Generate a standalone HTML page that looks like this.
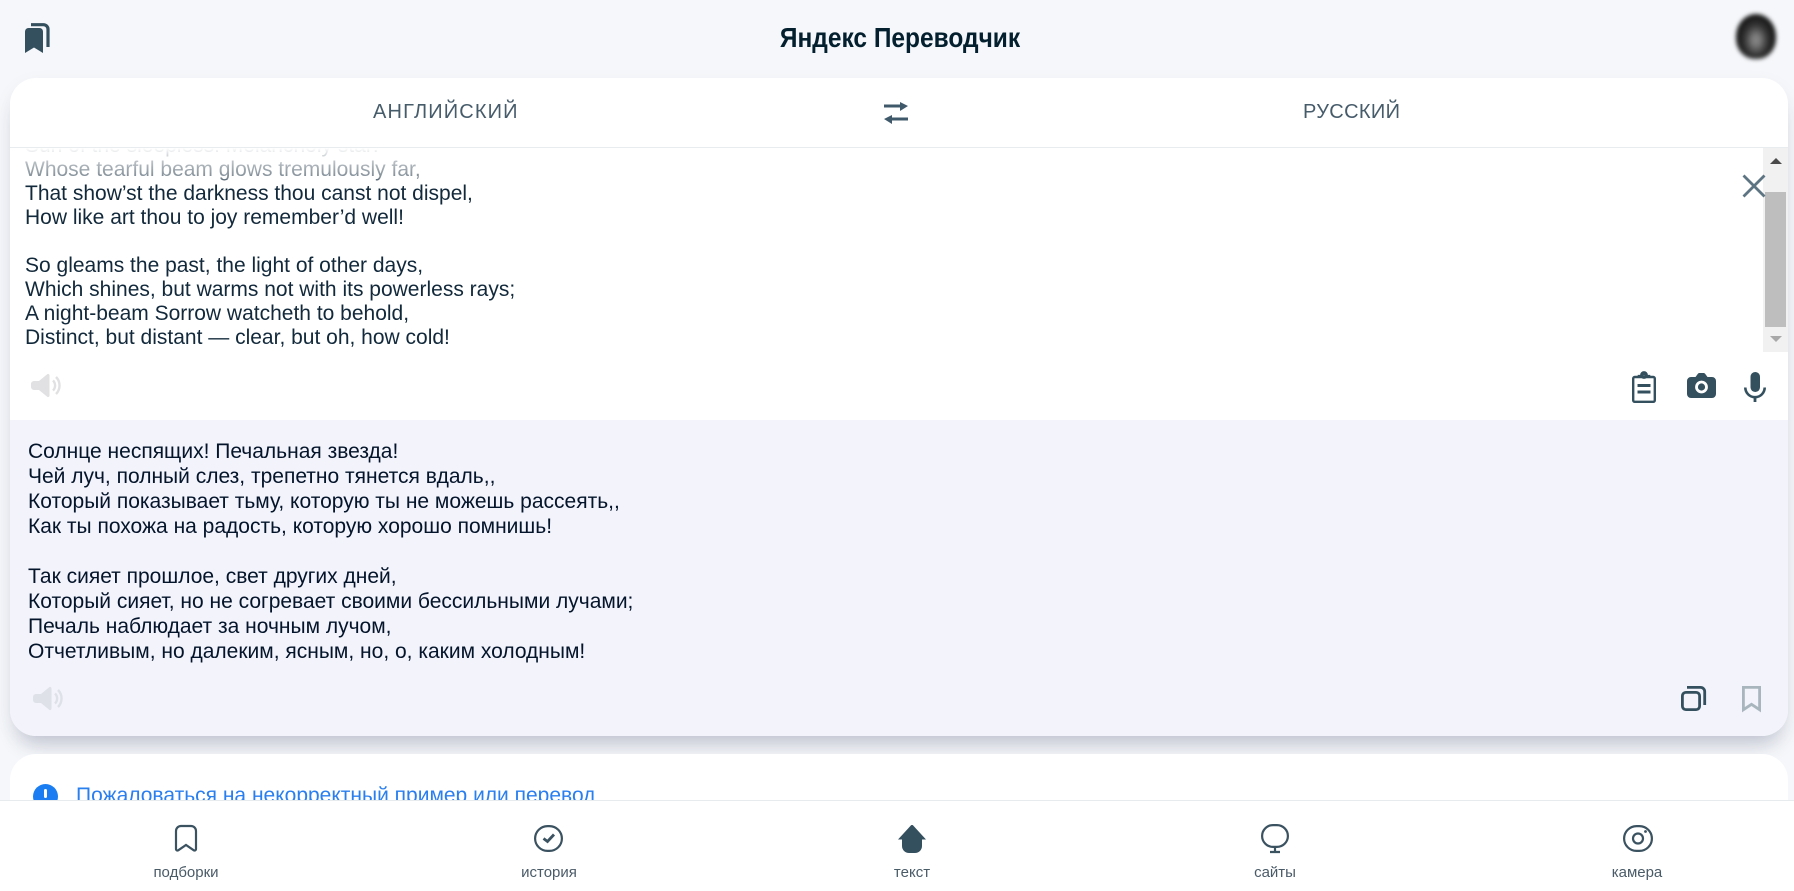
<!DOCTYPE html>
<html lang="ru">
<head>
<meta charset="utf-8">
<title>Яндекс Переводчик</title>
<style>
html,body{margin:0;padding:0;width:1794px;height:891px;overflow:hidden;background:#f5f7fa;font-family:"Liberation Sans",Arial,sans-serif}
.a{position:absolute}
svg{position:absolute;overflow:visible}
#title{left:680px;top:21px;width:440px;text-align:center;font-size:28px;line-height:34px;font-weight:bold;color:#04202f;transform:scaleX(.875);white-space:nowrap}
#card{left:10px;top:78px;width:1778px;height:658px;background:#fff;border-radius:26px;box-shadow:0 16px 20px -8px rgba(50,60,90,.24),0 6px 22px -4px rgba(60,70,110,.08);overflow:hidden}
.lang{top:99px;font-size:20px;line-height:26px;color:#475c6b;white-space:nowrap}
#hline{left:10px;top:147px;width:1778px;height:1px;background:#e9ecef}
#clip{left:10px;top:148px;width:1753px;height:204px;overflow:hidden}
#clip #src2{position:absolute;left:15px;top:-14px;font-size:21px;line-height:24px;color:#12293b;white-space:pre}
#fade{left:10px;top:148px;width:1753px;height:36px;background:linear-gradient(#fff 0,rgba(255,255,255,.8) 8px,rgba(255,255,255,.45) 30px,rgba(255,255,255,0) 36px)}
#tr{left:10px;top:420px;width:1778px;height:316px;background:#f2f3fb;border-radius:0 0 26px 26px}
#trt{left:28px;top:439px;font-size:21px;line-height:25px;color:#04142a;white-space:pre}
#card2{left:10px;top:754px;width:1778px;height:120px;background:#fff;border-radius:26px 26px 0 0}
#link{left:76px;top:783px;font-size:21px;line-height:26px;color:#2a7fef;white-space:nowrap}
#foot{left:0;top:800px;width:1794px;height:91px;background:#fff;border-top:1px solid #e8ebee;box-sizing:border-box}
.lab{top:864px;width:160px;text-align:center;font-size:15px;line-height:18px;color:#4a5b68}
#track{left:1763px;top:148px;width:25px;height:204px;background:#f1f1f1}
#thumb{left:1765px;top:192px;width:21px;height:135px;background:#bebebe}
#av{left:1736px;top:14px;width:40px;height:45px;border-radius:50% 50% 46% 46%;background:radial-gradient(ellipse at 50% 58%,#8a8a8a 0,#7a7a7a 14%,#333 42%,#151515 68%);filter:blur(2px)}
</style>
</head>
<body>

<svg style="left:25px;top:23px" width="25" height="31" viewBox="0 0 25 31">
<path d="M6 1.700h12.500a4.500 4.500 0 0 1 4.500 4.500V24" fill="none" stroke="#34505f" stroke-width="3.200"/>
<path d="M0 8.500A3.500 3.500 0 0 1 3.500 5h11A3.500 3.500 0 0 1 18 8.500V30l-9-5.500L0 30z" fill="#34505f"/>
</svg>
<div id="title" class="a">Яндекс Переводчик</div>
<div id="av" class="a"></div>

<div id="card" class="a"></div>
<div class="a lang" style="left:373px;letter-spacing:1.15px">АНГЛИЙСКИЙ</div>
<svg style="left:884px;top:102px" width="24" height="22" viewBox="0 0 24 22" fill="#40596a">
<rect x="0" y="2.500" width="18" height="3"/><path d="M16 0l8 4-8 5z"/>
<rect x="6" y="15.500" width="18" height="3"/><path d="M8 13l-8 4 8 5z"/>
</svg>
<div class="a lang" style="left:1303px;letter-spacing:.35px">РУССКИЙ</div>
<div id="hline" class="a"></div>

<div id="clip" class="a"><div id="src2">Sun of the sleepless! Melancholy star!
Whose tearful beam glows tremulously far,
That show’st the darkness thou canst not dispel,
How like art thou to joy remember’d well!

So gleams the past, the light of other days,
Which shines, but warms not with its powerless rays;
A night-beam Sorrow watcheth to behold,
Distinct, but distant — clear, but oh, how cold!</div></div>
<div id="fade" class="a"></div>

<div id="track" class="a"></div>
<div id="thumb" class="a"></div>
<svg style="left:1770px;top:157px" width="12" height="8"><path d="M0 7L6 1l6 6z" fill="#4a4a4a"/></svg>
<svg style="left:1770px;top:335px" width="12" height="8"><path d="M0 1l6 6 6-6z" fill="#a8a8a8"/></svg>

<svg style="left:1742px;top:174px" width="24" height="24" viewBox="0 0 24 24"><path d="M1.500 1.500l21 21M22.500 1.500l-21 21" stroke="#5d7583" stroke-width="2.800" fill="none"/></svg>

<svg style="left:31px;top:373px" width="29" height="25" viewBox="0 0 29 25">
<path d="M3 8h5L16.500 1a1.500 1.500 0 0 1 2 1.200v20.600a1.500 1.500 0 0 1-2 1.200L8 17H3a3 3 0 0 1-3-3v-3a3 3 0 0 1 3-3z" fill="#e1e1e3"/>
<path d="M22 7.500a7 7 0 0 1 0 10M25 4a12 12 0 0 1 0 17" fill="none" stroke="#e1e1e3" stroke-width="2.400"/>
</svg>

<svg style="left:1632px;top:371px" width="24" height="32" viewBox="0 0 24 32">
<rect x="1.200" y="6" width="21.600" height="24.800" rx="1.500" fill="none" stroke="#34505f" stroke-width="2.400"/>
<path d="M7 7V5.200h3a2 2 0 1 1 4 0h3V7" fill="none" stroke="#34505f" stroke-width="2.600"/>
<circle cx="12" cy="4" r="2.800" fill="none" stroke="#34505f" stroke-width="2.200"/>
<path d="M5.500 14.500h13M5.500 21h13" stroke="#34505f" stroke-width="3"/>
</svg>
<svg style="left:1687px;top:373px" width="29" height="25" viewBox="0 0 29 25">
<path d="M4 4h4.500L11 .6C11.400.2 12 0 12.500 0h4c.5 0 1.100.2 1.500.6L20.500 4H25a4 4 0 0 1 4 4v13a4 4 0 0 1-4 4H4a4 4 0 0 1-4-4V8a4 4 0 0 1 4-4z" fill="#34505f"/>
<circle cx="14.500" cy="14" r="5" fill="none" stroke="#fff" stroke-width="2.800"/>
</svg>
<svg style="left:1744px;top:372px" width="22" height="30" viewBox="0 0 22 30">
<rect x="6.500" y="0" width="9.500" height="20" rx="4.700" fill="#34505f"/>
<path d="M1.300 15.500a9.700 9.700 0 0 0 19.400 0" fill="none" stroke="#34505f" stroke-width="2.600"/>
<path d="M11 24v6" stroke="#34505f" stroke-width="2.800"/>
</svg>

<div id="tr" class="a"></div>
<div id="trt" class="a">Солнце неспящих! Печальная звезда!
Чей луч, полный слез, трепетно тянется вдаль,,
Который показывает тьму, которую ты не можешь рассеять,,
Как ты похожа на радость, которую хорошо помнишь!

Так сияет прошлое, свет других дней,
Который сияет, но не согревает своими бессильными лучами;
Печаль наблюдает за ночным лучом,
Отчетливым, но далеким, ясным, но, о, каким холодным!</div>

<svg style="left:33px;top:686px" width="29" height="25" viewBox="0 0 29 25">
<path d="M3 8h5L16.500 1a1.500 1.500 0 0 1 2 1.200v20.600a1.500 1.500 0 0 1-2 1.200L8 17H3a3 3 0 0 1-3-3v-3a3 3 0 0 1 3-3z" fill="#dfe1e8"/>
<path d="M22 7.500a7 7 0 0 1 0 10M25 4a12 12 0 0 1 0 17" fill="none" stroke="#dfe1e8" stroke-width="2.400"/>
</svg>
<svg style="left:1681px;top:686px" width="25" height="25" viewBox="0 0 25 25">
<rect x="1.400" y="6.400" width="17.200" height="17.200" rx="3.500" fill="none" stroke="#34505f" stroke-width="2.800"/>
<path d="M6 1.400h13.500a4.200 4.200 0 0 1 4.200 4.200V19" fill="none" stroke="#34505f" stroke-width="2.800"/>
</svg>
<svg style="left:1742px;top:686px" width="19" height="26" viewBox="0 0 19 26">
<path d="M1.400 1.400h16.200v22.300L9.500 18.300 1.400 23.700z" fill="none" stroke="#a9b5bc" stroke-width="2.800"/>
</svg>

<div id="card2" class="a"></div>
<svg style="left:33px;top:784px" width="25" height="25" viewBox="0 0 25 25">
<circle cx="12.500" cy="12.500" r="12.500" fill="#1a7ef2"/>
<rect x="11" y="5" width="3" height="9" rx="1.500" fill="#fff"/>
</svg>
<div id="link" class="a">Пожаловаться на некорректный пример или перевод</div>

<div id="foot" class="a"></div>
<svg style="left:175px;top:825px" width="22" height="27" viewBox="0 0 22 27">
<path d="M1 6A5 5 0 0 1 6 1h10a5 5 0 0 1 5 5v18a1.500 1.500 0 0 1-2.400 1.200L11 20l-7.600 5.200A1.500 1.500 0 0 1 1 24z" fill="none" stroke="#3b5261" stroke-width="2.200"/>
</svg>
<svg style="left:534px;top:825px" width="29" height="27" viewBox="0 0 29 27">
<rect x="1.100" y="1.100" width="26.800" height="24.800" rx="12.400" fill="none" stroke="#3b5261" stroke-width="2.200"/>
<path d="M9.500 13.500l4 3 6.500-7" fill="none" stroke="#3b5261" stroke-width="2.800"/>
</svg>
<svg style="left:898px;top:825px" width="28" height="28" viewBox="0 0 28 28">
<path d="M14 0c.6 0 1 .2 1.400.7L28 14.500h-4V21a7 7 0 0 1-7 7h-6a7 7 0 0 1-7-7v-6.500H0L12.600.7C13 .2 13.400 0 14 0z" fill="#34505f"/>
</svg>
<svg style="left:1261px;top:824px" width="28" height="29" viewBox="0 0 28 29">
<rect x="1.100" y="1.100" width="25.800" height="21.800" rx="10.900" fill="none" stroke="#3b5261" stroke-width="2.200"/>
<path d="M14 23v5M9 28h10" stroke="#3b5261" stroke-width="2.200"/>
</svg>
<svg style="left:1623px;top:825px" width="30" height="27" viewBox="0 0 30 27">
<rect x="1.100" y="1.100" width="27.800" height="24.800" rx="12.400" fill="none" stroke="#3b5261" stroke-width="2.200"/>
<circle cx="15" cy="13.500" r="5" fill="none" stroke="#3b5261" stroke-width="2.200"/>
<circle cx="22.500" cy="6.500" r="1.400" fill="#3b5261"/>
</svg>
<div class="a lab" style="left:106px">подборки</div>
<div class="a lab" style="left:469px">история</div>
<div class="a lab" style="left:832px">текст</div>
<div class="a lab" style="left:1195px">сайты</div>
<div class="a lab" style="left:1557px">камера</div>

</body>
</html>
